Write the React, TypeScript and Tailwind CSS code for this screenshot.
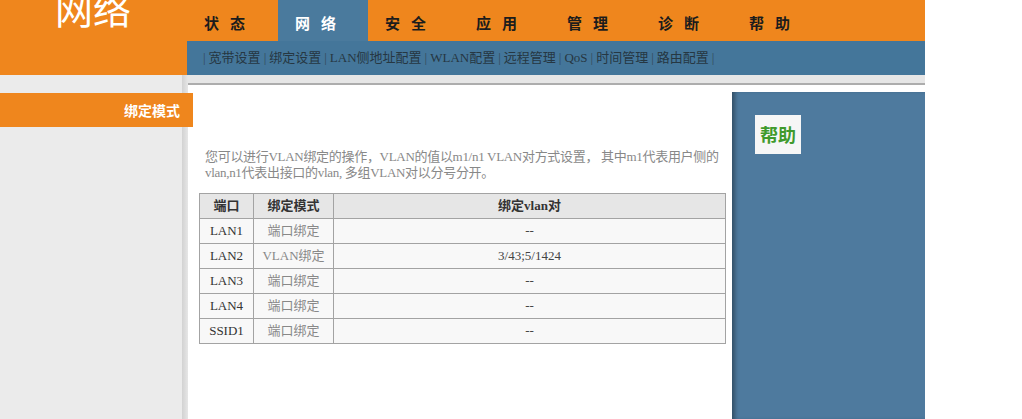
const tabs = ["状态", "网络", "安全", "应用", "管理", "诊断", "帮助"];

const subnav = ["宽带设置", "绑定设置", "LAN侧地址配置", "WLAN配置", "远程管理", "QoS", "时间管理", "路由配置"];

const rows = [
  { port: "LAN1", mode: "端口绑定", pair: "--" },
  { port: "LAN2", mode: "VLAN绑定", pair: "3/43;5/1424" },
  { port: "LAN3", mode: "端口绑定", pair: "--" },
  { port: "LAN4", mode: "端口绑定", pair: "--" },
  { port: "SSID1", mode: "端口绑定", pair: "--" },
];

function Header() {
  return (
    <div className="flex h-[75px]">
      <div className="w-[187px] bg-[#ef861d] overflow-hidden">
        <div className="pl-[55px] -mt-[11px] text-[38px] leading-[38px] text-white font-['Noto_Sans_CJK_SC',sans-serif]">
          网络
        </div>
      </div>
      <div className="flex-1 flex flex-col">
        <div className="h-[41px] bg-[#ef861d] flex">
          {tabs.map((t, i) => (
            <div
              key={t}
              className={
                i === 1
                  ? "w-[90px] h-full flex items-center pl-[17px] pt-[5px] bg-[#4a7a9d] text-white"
                  : "w-[91px] h-full flex items-center pl-[17px] pt-[5px] text-[#1c1c1c]"
              }
            >
              <span className="text-[15px] font-bold tracking-[11px] font-['Noto_Sans_CJK_SC',sans-serif]">{t}</span>
            </div>
          ))}
        </div>
        <div className="h-[34px] bg-[#44769a] flex items-center pl-[13px] text-[13px] text-[#263742]">
          {subnav.map((s) => (
            <span key={s} className="flex items-center">
              <span className="px-[3px] text-[#33495a]">|</span>
              <span>{s}</span>
            </span>
          ))}
          <span className="px-[3px] text-[#33495a]">|</span>
        </div>
      </div>
    </div>
  );
}

function BindTable() {
  return (
    <table className="ml-[11px] mt-[12px] w-[527px] border-collapse text-[13px]">
      <thead>
        <tr className="h-[25px] bg-[#e6e6e6] text-[#333]">
          <th className="w-[54px] border border-[#a3a3a3] font-bold">端口</th>
          <th className="w-[80px] border border-[#a3a3a3] font-bold">绑定模式</th>
          <th className="border border-[#a3a3a3] font-bold">绑定vlan对</th>
        </tr>
      </thead>
      <tbody>
        {rows.map((r) => (
          <tr key={r.port} className="h-[25px] bg-[#f8f8f8]">
            <td className="border border-[#a3a3a3] text-center text-[#333]">{r.port}</td>
            <td className="border border-[#a3a3a3] text-center text-[#888]">{r.mode}</td>
            <td className="border border-[#a3a3a3] text-center text-[#444]">{r.pair}</td>
          </tr>
        ))}
      </tbody>
    </table>
  );
}

export default function App() {
  return (
    <div className="w-[1022px] h-[419px] overflow-hidden bg-white font-['Liberation_Serif','Noto_Sans_CJK_SC',serif]">
      <div className="w-[925px]">
        <Header />
        <div className="flex h-[344px]">
          <div className="w-[182px] bg-[#ebebeb] pt-[18px] relative z-10">
            <div className="w-[193px] h-[34px] bg-[#ef861d] flex items-center justify-end pr-[13px] text-white text-[14px] font-bold font-['Noto_Sans_CJK_SC',sans-serif]">
              绑定模式
            </div>
          </div>
          <div className="w-[6px] bg-gradient-to-r from-[#d2d2d2] to-[#e6e6e6]" />
          <div className="flex-1 flex flex-col">
            <div className="h-[10px] bg-[#e6e6e6] border-b-2 border-[#adadad]" />
            <div className="flex-1 flex">
              <div className="w-[544px] bg-white pt-[64px]">
                <p className="pl-[17px] text-[13px] leading-[16px] tracking-[-0.3px] whitespace-nowrap text-[#888]">
                  您可以进行VLAN绑定的操作，VLAN的值以m1/n1 VLAN对方式设置， 其中m1代表用户侧的
                  <br />
                  vlan,n1代表出接口的vlan, 多组VLAN对以分号分开。
                </p>
                <BindTable />
              </div>
              <div className="flex-1 bg-white pt-[7px] flex">
                <div className="flex-1 bg-[#4e7a9e] shadow-[inset_5px_0_4px_-2px_rgba(0,0,0,0.35)] pl-[23px] pt-[23px]">
                  <div className="w-[46px] h-[39px] bg-[#f6f6f6] flex items-center justify-center text-[18px] font-bold text-[#3f9a2c] font-['Noto_Sans_CJK_SC',sans-serif]">
                    帮助
                  </div>
                </div>
              </div>
            </div>
          </div>
        </div>
      </div>
    </div>
  );
}
